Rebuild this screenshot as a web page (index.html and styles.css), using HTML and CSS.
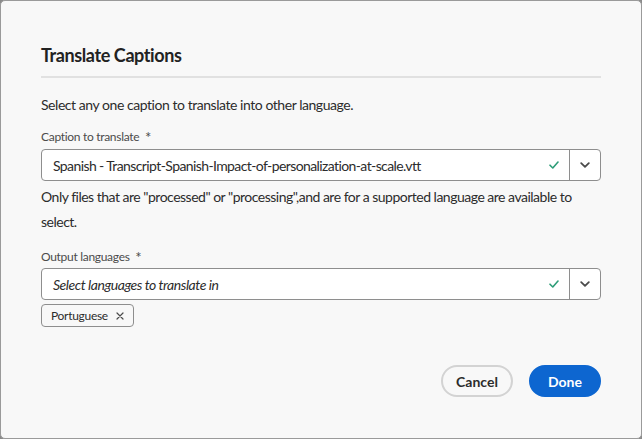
FILE: index.html
```html
<!DOCTYPE html>
<html>
<head>
<meta charset="utf-8">
<link rel="stylesheet" href="styles.css">
</head>
<body>
<div class="dialog">
  <h1 class="title">Translate Captions</h1>
  <div class="divider"></div>
  <p class="desc">Select any one caption to translate into other language.</p>
  <div class="field">
    <div class="label">Caption to translate <span class="req">*</span></div>
    <div class="combo">
      <div class="combo-input">Spanish - Transcript-Spanish-Impact-of-personalization-at-scale.vtt</div>
      <svg class="check" width="10" height="8" viewBox="0 0 10 8"><path d="M1 4.2 L3.8 7 L9 1" fill="none" stroke="#2d9d78" stroke-width="1.6" stroke-linecap="round" stroke-linejoin="round"/></svg>
      <div class="combo-btn"><svg width="10" height="6" viewBox="0 0 10 6"><path d="M1.2 1.2 L5 4.8 L8.8 1.2" fill="none" stroke="#4b4b4b" stroke-width="1.8" stroke-linecap="round" stroke-linejoin="round"/></svg></div>
    </div>
  </div>
  <p class="help">Only files that are "processed" or "processing",and are for a supported language are available to select.</p>
  <div class="field">
    <div class="label label-2">Output languages <span class="req">*</span></div>
    <div class="combo">
      <div class="combo-input placeholder">Select languages to translate in</div>
      <svg class="check" width="10" height="8" viewBox="0 0 10 8"><path d="M1 4.2 L3.8 7 L9 1" fill="none" stroke="#2d9d78" stroke-width="1.6" stroke-linecap="round" stroke-linejoin="round"/></svg>
      <div class="combo-btn"><svg width="10" height="6" viewBox="0 0 10 6"><path d="M1.2 1.2 L5 4.8 L8.8 1.2" fill="none" stroke="#4b4b4b" stroke-width="1.8" stroke-linecap="round" stroke-linejoin="round"/></svg></div>
    </div>
    <div class="tags">
      <span class="tag">Portuguese <svg class="x" width="8" height="8" viewBox="0 0 8 8"><path d="M1 1 L7 7 M7 1 L1 7" stroke="#4b4b4b" stroke-width="1.2" stroke-linecap="round"/></svg></span>
    </div>
  </div>
  <div class="actions">
    <button class="btn btn-secondary">Cancel</button>
    <button class="btn btn-cta">Done</button>
  </div>
</div>
</body>
</html>
```
FILE: styles.css
```css
html, body {
  margin: 0;
  padding: 0;
  background: #8a8a8a;
}
body {
  font-family: Lato, "Open Sans", sans-serif;
  color: #2c2c2c;
}
.dialog {
  box-sizing: border-box;
  width: 642px;
  height: 439px;
  background: #f8f8f8;
  border: 1px solid #9a9a9a;
  border-radius: 5px;
  padding: 43px 40px 0 40px;
  display: flex;
  flex-direction: column;
}
.title {
  margin: 0;
  font-size: 18px;
  line-height: 22px;
  font-weight: 700;
  letter-spacing: -0.4px;
  color: #222;
}
.divider {
  height: 2px;
  background: #e1e1e1;
  margin-top: 10px;
}
.desc {
  margin: 17px 0 0 0;
  font-size: 14px;
  line-height: 20px;
  letter-spacing: -0.45px;
}
.field {
  display: flex;
  flex-direction: column;
}
.label {
  margin-top: 14px;
  font-size: 12px;
  line-height: 16px;
  letter-spacing: -0.3px;
  color: #4b4b4b;
}
.label-2 {
  margin-top: 15px;
}
.req {
  margin-left: 3px;
  font-size: 15px;
  line-height: 10px;
  vertical-align: -2px;
}
.combo {
  margin-top: 4px;
  height: 32px;
  box-sizing: border-box;
  border: 1px solid #8e8e8e;
  border-radius: 4px;
  background: #fff;
  display: flex;
  align-items: center;
}
.label-2 + .combo {
  margin-top: 3px;
}
.combo-input {
  flex: 1;
  padding-left: 11px;
  font-size: 14px;
  letter-spacing: -0.6px;
  white-space: nowrap;
  overflow: hidden;
}
.placeholder {
  font-style: italic;
  letter-spacing: -0.45px;
}
.check {
  margin-right: 10px;
}
.combo-btn {
  width: 30px;
  height: 100%;
  border-left: 1px solid #8e8e8e;
  display: flex;
  align-items: center;
  justify-content: center;
}
.help {
  margin: 3px 0 0 0;
  font-size: 14px;
  line-height: 25px;
  letter-spacing: -0.5px;
}
.tags {
  margin-top: 4px;
  display: flex;
}
.tag {
  box-sizing: border-box;
  height: 23px;
  padding: 0 9px 0 9px;
  border: 1px solid #8e8e8e;
  border-radius: 4px;
  font-size: 12px;
  letter-spacing: -0.3px;
  display: inline-flex;
  align-items: center;
  gap: 8px;
  color: #2c2c2c;
}
.actions {
  margin-top: 38px;
  display: flex;
  justify-content: flex-end;
  gap: 16px;
}
.btn {
  height: 32px;
  width: 72px;
  border-radius: 16px;
  font-family: inherit;
  font-size: 14px;
  font-weight: 700;
  padding: 0;
  box-sizing: border-box;
}
.btn-secondary {
  background: transparent;
  border: 2px solid #d3d3d3;
  color: #2c2c2c;
}
.btn-cta {
  background: #0d66d0;
  border: 2px solid #0d66d0;
  color: #fff;
}
```
